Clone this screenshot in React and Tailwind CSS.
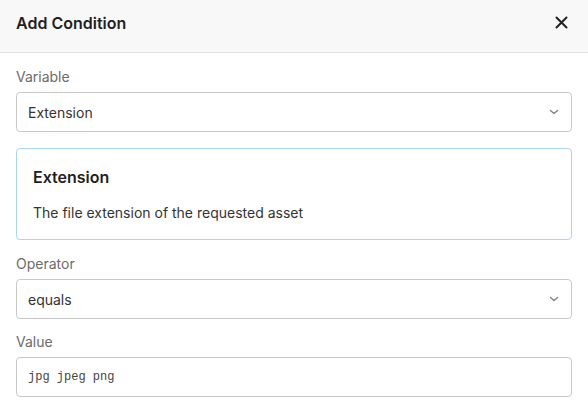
export default function App() {
  return (
    <div className="w-[588px] h-[416px] bg-white overflow-hidden font-['Inter',sans-serif]">
      <div className="h-[53px] bg-[#f8f8f8] border-b border-[#e2e2e2] flex items-start justify-between pl-4 pr-[20px] pt-[11px]">
        <div className="text-[16px] leading-6 font-semibold text-[#1f1f1f]">Add Condition</div>
        <svg width="13" height="13" viewBox="0 0 13 13" className="text-[#222] mt-[5px]">
          <path d="M1.5 1.5 L11.5 11.5 M11.5 1.5 L1.5 11.5" stroke="currentColor" strokeWidth="2" strokeLinecap="round" />
        </svg>
      </div>
      <div className="px-4 pt-[14px] flex flex-col">
        <label className="text-[14px] leading-5 text-[#6b6b6b]">Variable</label>
        <div className="mt-[5px] h-10 border border-[#c8c8c8] rounded-[4px] flex items-center justify-between pl-[11px] pr-[11px]">
          <span className="text-[14px] text-[#333]">Extension</span>
          <svg width="12" height="8" viewBox="0 0 12 8">
            <path d="M2.5 2.5 L6 5.5 L9.5 2.5" stroke="#808080" strokeWidth="1.4" fill="none" strokeLinecap="round" strokeLinejoin="round" />
          </svg>
        </div>
        <div className="mt-4 border border-[#a9d6f7] rounded-[4px] px-4 pt-4 pb-4">
          <div className="text-[16px] leading-6 font-semibold text-[#1f1f1f]">Extension</div>
          <div className="mt-[14px] text-[14px] leading-5 text-[#333]">The file extension of the requested asset</div>
        </div>
        <label className="mt-[14px] text-[14px] leading-5 text-[#6b6b6b]">Operator</label>
        <div className="mt-[5px] h-10 border border-[#c8c8c8] rounded-[4px] flex items-center justify-between pl-[11px] pr-[11px]">
          <span className="text-[14px] text-[#333]">equals</span>
          <svg width="12" height="8" viewBox="0 0 12 8">
            <path d="M2.5 2.5 L6 5.5 L9.5 2.5" stroke="#808080" strokeWidth="1.4" fill="none" strokeLinecap="round" strokeLinejoin="round" />
          </svg>
        </div>
        <label className="mt-[13px] text-[14px] leading-5 text-[#6b6b6b]">Value</label>
        <div className="mt-[5px] h-10 border border-[#c8c8c8] rounded-[4px] flex items-center pl-[11px]">
          <span className="text-[12px] text-[#444] font-['Liberation_Mono',monospace]">jpg jpeg png</span>
        </div>
      </div>
    </div>
  );
}
